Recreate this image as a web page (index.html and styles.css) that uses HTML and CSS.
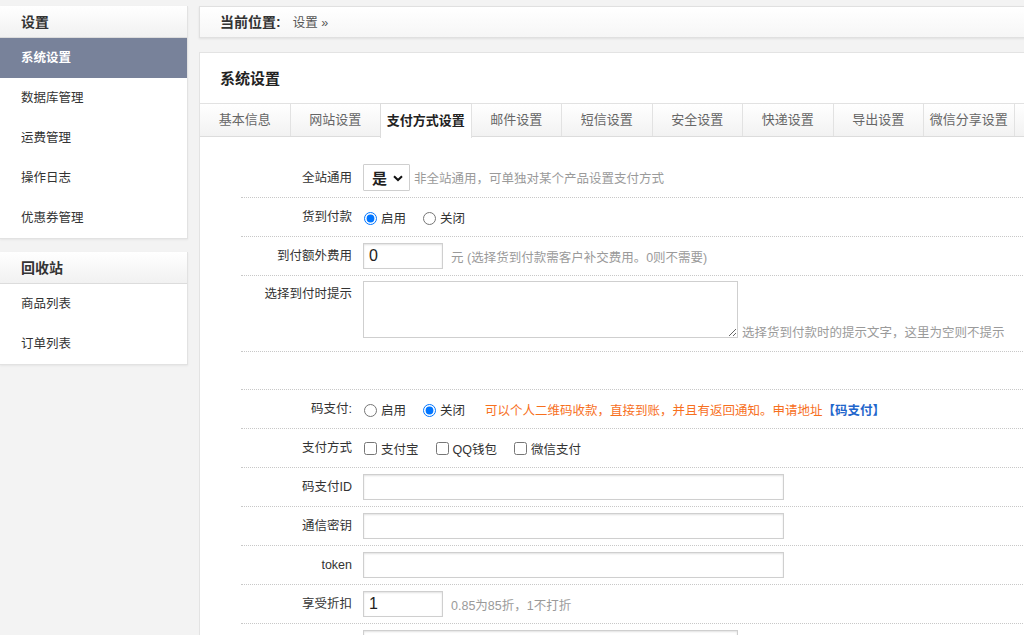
FILE: index.html
```html
<!DOCTYPE html>
<html lang="zh-CN">
<head>
<meta charset="utf-8">
<title>系统设置</title>
<link rel="stylesheet" href="styles.css">
</head>
<body>
<div class="layout">
  <aside class="sidebar">
    <div class="side-box">
      <div class="side-head">设置</div>
      <ul class="side-list">
        <li class="active">系统设置</li>
        <li>数据库管理</li>
        <li>运费管理</li>
        <li>操作日志</li>
        <li>优惠券管理</li>
      </ul>
    </div>
    <div class="side-box">
      <div class="side-head">回收站</div>
      <ul class="side-list">
        <li>商品列表</li>
        <li>订单列表</li>
      </ul>
    </div>
  </aside>
  <main class="main">
    <div class="crumb"><b>当前位置:</b><span class="crumb-path">设置 »</span></div>
    <section class="panel">
      <h2 class="panel-title">系统设置</h2>
      <ul class="tabs">
        <li>基本信息</li>
        <li>网站设置</li>
        <li class="active">支付方式设置</li>
        <li>邮件设置</li>
        <li>短信设置</li>
        <li>安全设置</li>
        <li>快递设置</li>
        <li>导出设置</li>
        <li>微信分享设置</li>
        <li></li>
      </ul>
      <div class="form">
        <div class="row">
          <div class="label">全站通用</div>
          <div class="field">
            <span class="select-wrap">
              <select class="select"><option>是</option><option>否</option></select>
              <svg class="chev" width="10" height="7" viewBox="0 0 10 7"><path d="M1 1.2 L5 5 L9 1.2" fill="none" stroke="#111" stroke-width="2"/></svg>
            </span>
            <span class="hint">非全站通用，可单独对某个产品设置支付方式</span>
          </div>
        </div>
        <div class="row">
          <div class="label">货到付款</div>
          <div class="field">
            <label class="opt"><input type="radio" name="cod" checked>启用</label>
            <label class="opt"><input type="radio" name="cod">关闭</label>
          </div>
        </div>
        <div class="row">
          <div class="label">到付额外费用</div>
          <div class="field">
            <input class="text short" type="text" value="0">
            <span class="hint gap">元 (选择货到付款需客户补交费用。0则不需要)</span>
          </div>
        </div>
        <div class="row row-tall">
          <div class="label">选择到付时提示</div>
          <div class="field field-bottom">
            <textarea class="area"></textarea>
            <span class="hint">选择货到付款时的提示文字，这里为空则不提示</span>
          </div>
        </div>
        <div class="row row-empty"></div>
        <div class="row">
          <div class="label">码支付:</div>
          <div class="field">
            <label class="opt"><input type="radio" name="codepay">启用</label>
            <label class="opt"><input type="radio" name="codepay" checked>关闭</label>
            <span class="notice">可以个人二维码收款，直接到账，并且有返回通知。申请地址<a class="notice-link">【码支付】</a></span>
          </div>
        </div>
        <div class="row">
          <div class="label">支付方式</div>
          <div class="field">
            <label class="opt"><input type="checkbox">支付宝</label>
            <label class="opt"><input type="checkbox">QQ钱包</label>
            <label class="opt"><input type="checkbox">微信支付</label>
          </div>
        </div>
        <div class="row">
          <div class="label">码支付ID</div>
          <div class="field"><input class="text long" type="text"></div>
        </div>
        <div class="row">
          <div class="label">通信密钥</div>
          <div class="field"><input class="text long" type="text"></div>
        </div>
        <div class="row">
          <div class="label">token</div>
          <div class="field"><input class="text long" type="text"></div>
        </div>
        <div class="row">
          <div class="label">享受折扣</div>
          <div class="field">
            <input class="text short" type="text" value="1">
            <span class="hint gap">0.85为85折，1不打折</span>
          </div>
        </div>
        <div class="row">
          <div class="label"></div>
          <div class="field"><input class="text mid" type="text"></div>
        </div>
      </div>
    </section>
  </main>
</div>
</body>
</html>
```

FILE: styles.css
```css
html, body {
  margin: 0;
  padding: 0;
  overflow: hidden;
  height: 100%;
}
body {
  background: #f3f3f3;
  font-family: "Liberation Sans", "Noto Sans CJK SC", sans-serif;
  font-size: 12.5px;
  color: #333;
}
ul {
  list-style: none;
  margin: 0;
  padding: 0;
}
.layout {
  display: flex;
  gap: 11px;
  padding-top: 6px;
  align-items: flex-start;
}

/* sidebar */
.sidebar {
  width: 188px;
  flex: none;
  display: flex;
  flex-direction: column;
  gap: 13px;
}
.side-box {
  background: #fff;
  border: 1px solid #e2e2e2;
  border-left: none;
  border-top: none;
  box-shadow: 0 1px 2px rgba(0,0,0,0.06);
}
.side-head {
  height: 31px;
  line-height: 32px;
  padding-left: 21px;
  font-size: 14px;
  font-weight: bold;
  color: #333;
  background: linear-gradient(#ffffff, #f1f1f1);
  border-bottom: 1px solid #dcdcdc;
}
.side-list li {
  height: 40px;
  line-height: 41px;
  padding-left: 21px;
  color: #333;
}
.side-list li.active {
  background: #78829a;
  color: #fff;
  font-weight: bold;
}

/* main */
.main {
  flex: 1;
  min-width: 0;
  margin-right: -12px;
  display: flex;
  flex-direction: column;
  gap: 14px;
}
.crumb {
  height: 30px;
  line-height: 30px;
  padding-left: 20px;
  background: linear-gradient(#ffffff, #f6f6f6);
  border: 1px solid #e0e0e0;
  box-shadow: 0 1px 2px rgba(0,0,0,0.08);
  font-size: 14px;
}
.crumb b {
  color: #333;
}
.crumb-path {
  margin-left: 12px;
  font-size: 12.5px;
  color: #555;
}
.panel {
  background: #fff;
  border: 1px solid #e3e3e3;
  border-bottom: none;
}
.panel-title {
  margin: 0;
  padding: 13px 0 12px 20px;
  line-height: 25px;
  font-size: 15px;
  font-weight: bold;
  color: #222;
}
.tabs {
  display: flex;
  border-top: 1px solid #e2e2e2;
  border-bottom: 1px solid #dcdcdc;
  height: 32px;
}
.tabs li {
  width: 89.5px;
  flex: none;
  border-right: 1px solid #e2e2e2;
  text-align: center;
  line-height: 32px;
  font-size: 13px;
  color: #666;
  background: linear-gradient(#ffffff, #f2f2f2);
}
.tabs li:last-child {
  width: 60px;
}
.tabs li.active {
  background: #fff;
  color: #222;
  font-weight: bold;
  margin-top: -1px;
  height: 34px;
  line-height: 34px;
  border-left: 1px solid #dcdcdc;
  border-top: 1px solid #dcdcdc;
  margin-left: -1px;
  position: relative;
}

/* form */
.form {
  padding: 21px 0 10px 41px;
}
.row {
  display: flex;
  align-items: center;
  padding: 6px 0;
  min-height: 26px;
  border-bottom: 1px dotted #c8c8c8;
}
.row-tall {
  align-items: flex-start;
  padding: 5px 0 13px;
}
.row-empty {
  min-height: 25px;
}
.label {
  width: 111px;
  flex: none;
  text-align: right;
  line-height: 26px;
  color: #333;
}
.field {
  margin-left: 11px;
  display: flex;
  align-items: center;
  white-space: nowrap;
}
.field-bottom {
  align-items: flex-end;
}
.select-wrap {
  position: relative;
  display: inline-block;
}
.select {
  appearance: none;
  -webkit-appearance: none;
  width: 47px;
  height: 27px;
  padding: 0 0 0 8px;
  border: 1px solid #cfcfcf;
  border-radius: 1px;
  background: #fff;
  font-family: "Noto Sans CJK SC", sans-serif;
  font-size: 15px;
  font-weight: bold;
  color: #222;
  display: block;
}
.chev {
  position: absolute;
  right: 7px;
  top: 11px;
  pointer-events: none;
}
.hint {
  color: #9a9a9a;
  margin-left: 4px;
}
.hint.gap {
  margin-left: 8px;
}
.field-bottom .hint {
  margin-left: 4px;
  line-height: 16px;
  margin-bottom: -3px;
}
.opt {
  display: inline-flex;
  align-items: center;
  margin-right: 16px;
  color: #333;
}
.opt input {
  margin: 0 4px 0 1px;
  width: 13px;
  height: 13px;
}
.opt input[type="radio"] {
  margin-top: 3px;
}
.text {
  height: 26px;
  box-sizing: border-box;
  border: 1px solid #cfcfcf;
  box-shadow: inset 0 1px 2px rgba(0,0,0,0.12);
  padding: 0 5px;
  font-family: "Liberation Sans", sans-serif;
  font-size: 16px;
  color: #222;
  background: #fff;
  outline: none;
}
.text.short {
  width: 80px;
}
.text.long {
  width: 421px;
}
.text.mid {
  width: 375px;
}
.area {
  width: 375px;
  height: 57px;
  box-sizing: border-box;
  border: 1px solid #cfcfcf;
  resize: both;
  margin: 0;
  display: block;
}
.notice {
  color: #f7701e;
  margin-left: 4px;
}
.notice-link {
  color: #1f66cc;
  font-weight: bold;
}
```
